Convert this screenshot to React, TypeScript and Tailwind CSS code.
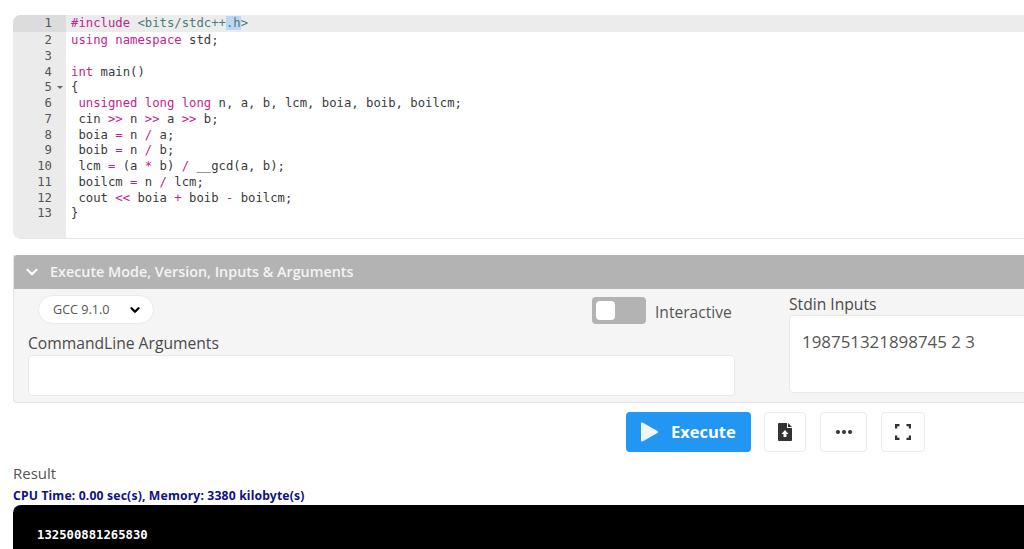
import React from "react";
import { ChevronDown } from "lucide-react";

const k = "text-[#c4238f]";
const o = "text-[#c4238f]";
type Seg = [string, string?];
const lines: Seg[][] = [
  [["#include", k], [" "], ["<bits/stdc++", "text-[#4d7a7a]"], [".h", "bg-[#bcd6f5] text-[#4d7a7a]"], [">", "text-[#4d7a7a]"]],
  [["using namespace", k], [" std;"]],
  [],
  [["int", k], [" main()"]],
  [["{"]],
  [[" "], ["unsigned long long", k], [" n, a, b, lcm, boia, boib, boilcm;"]],
  [[" cin "], [">>", o], [" n "], [">>", o], [" a "], [">>", o], [" b;"]],
  [[" boia "], ["=", o], [" n "], ["/", o], [" a;"]],
  [[" boib "], ["=", o], [" n "], ["/", o], [" b;"]],
  [[" lcm "], ["=", o], [" (a "], ["*", o], [" b) "], ["/", o], [" __gcd(a, b);"]],
  [[" boilcm "], ["=", o], [" n "], ["/", o], [" lcm;"]],
  [[" cout "], ["<<", o], [" boia "], ["+", o], [" boib "], ["-", o], [" boilcm;"]],
  [["}"]],
];

function Editor() {
  return (
    <div className="ml-[13px] mt-[15px] w-[1100px] h-[224px] flex rounded-l-[8px] overflow-hidden border-b border-[#e6e6e6] font-['DejaVu_Sans_Mono',monospace] text-[12.25px] leading-[15.75px] text-[#3a3a3a]">
      <div className="w-[53px] h-full bg-[#ebebeb] shrink-0 text-[#555]">
        {lines.map((_, i) => (
          <div key={i} className={`flex justify-end pr-[14px] relative ${i === 0 ? "bg-[#dcdcdc] h-[17px] pt-[1px]" : "h-[15.75px] pt-[1px]"}`}>
            {i + 1}
            {i === 4 && <span className="absolute left-[44px] top-[7px] w-0 h-0 border-x-[3px] border-t-[3px] border-x-transparent border-t-[#666]" />}
          </div>
        ))}
      </div>
      <div className="flex-1 h-full bg-white">
        {lines.map((segs, i) => (
          <div key={i} className={`pl-[5px] whitespace-pre ${i === 0 ? "h-[17px] bg-[#ececec] pt-[1px]" : "h-[15.75px] pt-[1px]"}`}>
            {segs.map((s, j) => (
              <span key={j} className={s[1]}>{s[0]}</span>
            ))}
          </div>
        ))}
      </div>
    </div>
  );
}

function Panel() {
  return (
    <div className="ml-[13px] mt-[16px] w-[1100px] rounded-bl-[4px] bg-[#f5f5f5] border-b border-l border-[#e4e4e4] h-[148px] overflow-hidden">
      <div className="h-[34px] bg-[#b3b3b3] flex items-center pl-[9px] gap-[9px] text-white font-semibold text-[14.35px] rounded-t-[3px]">
        <ChevronDown size={18} strokeWidth={3} />
        <span className="text-[#f4f4f4]">Execute Mode, Version, Inputs &amp; Arguments</span>
      </div>
      <div className="flex pl-[14px]">
        <div className="w-[707px] shrink-0">
          <div className="flex items-start pt-[6px] h-[41px] relative">
            <div className="ml-[10px] w-[116px] h-[29px] rounded-full bg-white border border-[#eaeaea] flex items-center pl-[14px] text-[12.6px] text-[#555]">
              <span className="relative top-[1px]">GCC 9.1.0</span>
              <ChevronDown size={14} strokeWidth={4} className="ml-[18px] text-black" />
            </div>
            <div className="ml-[438px] mt-[2px] w-[54px] h-[27px] rounded-[4px] bg-[#b3b3b3] p-[4px]">
              <div className="w-[19px] h-[19px] bg-white rounded-[4px]" />
            </div>
            <span className="ml-[9px] mt-[6px] text-[15.6px] font-medium text-[#555] leading-[22px]">Interactive</span>
          </div>
          <div className="text-[15.65px] font-medium text-[#4a4a4a] leading-[22px] mt-[2px]">CommandLine Arguments</div>
          <div className="mt-[1px] h-[41px] bg-white rounded-[4px] border border-[#e8e8e8]" />
        </div>
        <div className="ml-[54px] flex-1">
          <div className="text-[15.65px] font-medium text-[#4a4a4a] leading-[22px] mt-[4px]">Stdin Inputs</div>
          <div className="h-[78px] bg-white rounded-[4px] border border-[#e8e8e8] pl-[12px] pt-[14px] text-[16.9px] leading-[24px] text-[#555]">
            198751321898745 2 3
          </div>
        </div>
      </div>
    </div>
  );
}

function IconBtn({ w, children }: { w: string; children: React.ReactNode }) {
  return (
    <div className={`${w} h-[40px] rounded-[4px] bg-white border border-[#ececec] flex items-center justify-center`}>
      {children}
    </div>
  );
}

function Actions() {
  return (
    <div className="ml-[626px] mt-[9px] flex h-[40px]">
      <div className="w-[125px] h-[40px] rounded-[4px] bg-[#2196f3] flex items-center pl-[14px] text-white font-bold text-[16.5px]">
        <svg width="18" height="20" viewBox="0 0 18 20" className="shrink-0">
          <path d="M1 1.5a1 1 0 0 1 1.5-.9l15 8.5a1 1 0 0 1 0 1.8l-15 8.5A1 1 0 0 1 1 18.5z" fill="#eef6fe" />
        </svg>
        <span className="ml-[13px]">Execute</span>
      </div>
      <div className="ml-[13px]">
        <IconBtn w="w-[42px]">
          <svg width="14" height="18" viewBox="0 0 14 18">
            <path d="M1 0h8v5h5v12a1 1 0 0 1-1 1H1a1 1 0 0 1-1-1V1a1 1 0 0 1 1-1z" fill="#333" />
            <path d="M10 0l4 4h-4z" fill="#333" />
            <path d="M7 7l3.5 4H8.5v3h-3v-3H3.5z" fill="#fff" />
          </svg>
        </IconBtn>
      </div>
      <div className="ml-[14px]">
        <IconBtn w="w-[47px]">
          <svg width="16" height="4" viewBox="0 0 16 4">
            <circle cx="2" cy="2" r="2" fill="#333" />
            <circle cx="8" cy="2" r="2" fill="#333" />
            <circle cx="14" cy="2" r="2" fill="#333" />
          </svg>
        </IconBtn>
      </div>
      <div className="ml-[14px]">
        <IconBtn w="w-[44px]">
          <svg width="16" height="16" viewBox="0 0 16 16" fill="none" stroke="#333" strokeWidth="2.4">
            <path d="M1 4.5V1h3.5M11.5 1H15v3.5M15 11.5V15h-3.5M4.5 15H1v-3.5" />
          </svg>
        </IconBtn>
      </div>
    </div>
  );
}

export default function App() {
  return (
    <div className="w-[1024px] h-[549px] overflow-hidden bg-white font-['Open_Sans','Noto_Sans',sans-serif]">
      <Editor />
      <Panel />
      <Actions />
      <div className="ml-[13px] mt-[10px] text-[15px] leading-[22px] text-[#555]">Result</div>
      <div className="ml-[13px] mt-[4px] text-[12.2px] leading-[16px] font-bold text-[#10108a] font-['Noto_Sans',sans-serif] tracking-[0.15px]">
        CPU Time: 0.00 sec(s), Memory: 3380 kilobyte(s)
      </div>
      <div className="ml-[13px] mt-[1px] w-[1100px] h-[60px] bg-black rounded-tl-[8px] pl-[24px] pt-[22px] text-white font-bold font-['DejaVu_Sans_Mono',monospace] text-[12.25px] leading-[16px]">
        132500881265830
      </div>
    </div>
  );
}
